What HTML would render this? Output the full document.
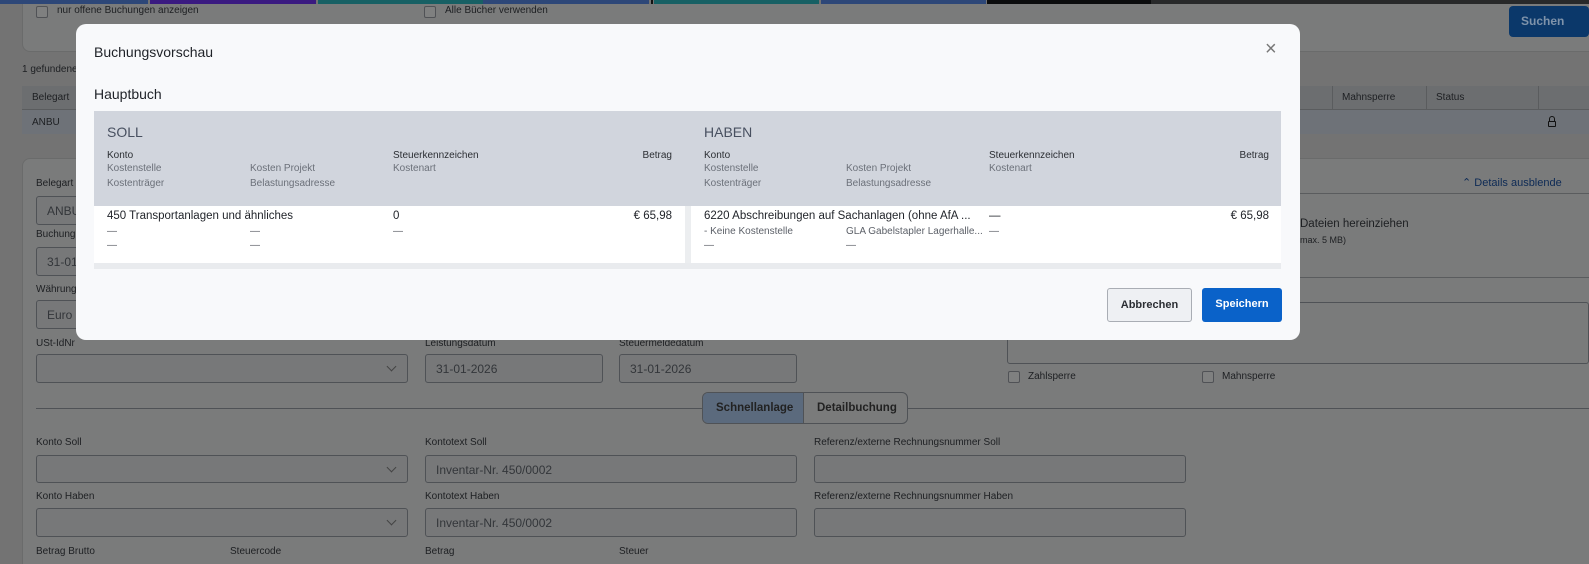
<!DOCTYPE html>
<html><head><meta charset="utf-8"><style>
*{box-sizing:border-box;margin:0;padding:0}
html,body{width:1589px;height:564px;overflow:hidden;background:#737373}
body{font-family:"Liberation Sans",sans-serif;position:relative;color:#1f2228}
#w{position:absolute;left:0;top:0;width:1589px;height:564px;overflow:hidden;background:#737373}
.a{position:absolute}
.bar{position:absolute;top:0;height:4px}
.lbl{position:absolute;font-size:10px;color:#1d1f22}
.inp{position:absolute;border:1px solid #4f5256;border-radius:3px;background:#777879;height:29px;font-size:12px;color:#33363a;padding:7px 10px}
.chev{position:absolute;right:12px;top:8px;width:7px;height:7px;border-right:1px solid #444;border-bottom:1px solid #444;transform:rotate(45deg)}
.cb{position:absolute;width:12px;height:12px;border:1px solid #505256;border-radius:2px;background:#7f8080}
.m{position:absolute;left:76px;top:24px;width:1224px;height:316px;background:#f8f9fb;border-radius:10px}
.h{font-size:10px;color:#2b2e33;position:absolute}
.s{font-size:10px;color:#6b7079;position:absolute}
.d{font-size:11.5px;color:#1f2228;position:absolute}
.ds{font-size:10px;color:#5c6068;position:absolute}
</style></head><body><div id="w">
<div class="bar" style="left:0;width:148px;background:#2d4778"></div>
<div class="bar" style="left:150px;width:166px;background:#3a1a80"></div>
<div class="bar" style="left:318px;width:330px;background:#176064"></div>
<div class="bar" style="left:483px;width:166px;background:#2d4778"></div>
<div class="bar" style="left:651px;width:2px;background:#111"></div>
<div class="bar" style="left:654px;width:165px;background:#176064"></div>
<div class="bar" style="left:821px;width:165px;background:#2d4778"></div>
<div class="bar" style="left:987px;width:164px;background:#0b0c0d"></div>
<div class="bar" style="left:1151px;width:438px;background:#28292a"></div>

<div class="a" style="left:22px;top:4px;width:1580px;height:48px;background:#7a7b7b;border:1px solid #6a6b6b;border-top:none;border-radius:0 0 8px 8px"></div>
<div class="cb" style="left:36px;top:6px"></div><div class="lbl" style="left:57px;top:5px">nur offene Buchungen anzeigen</div>
<div class="cb" style="left:424px;top:6px"></div><div class="lbl" style="left:445px;top:5px">Alle Bücher verwenden</div>
<div class="a" style="left:1509px;top:6px;width:80px;height:31px;background:#0b386a;border-radius:4px;color:#7f93aa;font-size:12px;font-weight:bold;padding:8px 0 0 12px">Suchen</div>
<div class="lbl" style="left:22px;top:64px">1 gefundene</div>
<div class="a" style="left:22px;top:86px;width:1567px;height:24px;background:#6c6e70;border-bottom:1px solid #5a5c5e"></div>
<div class="lbl" style="left:32px;top:92px">Belegart</div>
<div class="a" style="left:1332px;top:86px;width:1px;height:24px;background:#5a5c5e"></div>
<div class="a" style="left:1426px;top:86px;width:1px;height:24px;background:#5a5c5e"></div>
<div class="a" style="left:1538px;top:86px;width:1px;height:24px;background:#5a5c5e"></div>
<div class="lbl" style="left:1342px;top:92px">Mahnsperre</div>
<div class="lbl" style="left:1436px;top:92px">Status</div>
<div class="a" style="left:22px;top:110px;width:1567px;height:24px;background:#6e7278"></div>
<div class="lbl" style="left:32px;top:117px">ANBU</div>
<div class="a" style="left:1548px;top:121px;width:8px;height:6px;border:1px solid #111;border-radius:1px"></div>
<div class="a" style="left:1549px;top:116px;width:6px;height:6px;border:1px solid #111;border-bottom:none;border-radius:3px 3px 0 0"></div>

<div class="a" style="left:22px;top:158px;width:1580px;height:420px;background:#7a7b7b;border:1px solid #6a6b6b;border-radius:8px"></div>
<div class="lbl" style="left:36px;top:178px">Belegart</div>
<div class="inp" style="left:36px;top:196px;width:80px">ANBU</div>
<div class="lbl" style="left:36px;top:229px">Buchung</div>
<div class="inp" style="left:36px;top:247px;width:80px">31-01</div>
<div class="lbl" style="left:36px;top:284px">Währung</div>
<div class="inp" style="left:36px;top:300px;width:80px">Euro</div>
<div class="lbl" style="left:1462px;top:176px;color:#0d2a55;font-size:11px">&#8963; Details ausblende</div>
<div class="a" style="left:1300px;top:193px;width:289px;height:1px;background:#5a5c5e"></div>
<div class="lbl" style="left:1300px;top:218px;font-size:11.5px">Dateien hereinziehen</div>
<div class="lbl" style="left:1300px;top:235px;font-size:9px">max. 5 MB)</div>
<div class="a" style="left:1300px;top:277px;width:289px;height:1px;background:#5a5c5e"></div>
<div class="a" style="left:1007px;top:302px;width:582px;height:62px;border:1px solid #4f5256;border-radius:3px"></div>
<div class="cb" style="left:1008px;top:371px"></div><div class="lbl" style="left:1028px;top:371px">Zahlsperre</div>
<div class="cb" style="left:1202px;top:371px"></div><div class="lbl" style="left:1222px;top:371px">Mahnsperre</div>

<div class="lbl" style="left:36px;top:338px">USt-IdNr</div>
<div class="inp" style="left:36px;top:354px;width:372px"><div class="chev"></div></div>
<div class="lbl" style="left:425px;top:338px">Leistungsdatum</div>
<div class="inp" style="left:425px;top:354px;width:178px">31-01-2026</div>
<div class="lbl" style="left:619px;top:338px">Steuermeldedatum</div>
<div class="inp" style="left:619px;top:354px;width:178px">31-01-2026</div>

<div class="a" style="left:36px;top:408px;width:666px;height:1px;background:#4f5256"></div>
<div class="a" style="left:908px;top:408px;width:681px;height:1px;background:#4f5256"></div>
<div class="a" style="left:702px;top:392px;width:206px;height:32px;border:1px solid #4f5256;border-radius:6px;overflow:hidden">
<div class="a" style="left:0;top:0;width:101px;height:30px;background:#5b6a7d;border-right:1px solid #4f5256;font-size:11.5px;font-weight:bold;padding:9px 0 0 13px;color:#222">Schnellanlage</div>
<div class="a" style="left:102px;top:0;width:104px;height:30px;font-size:11.5px;font-weight:bold;padding:9px 0 0 12px;color:#222">Detailbuchung</div></div>

<div class="lbl" style="left:36px;top:437px">Konto Soll</div>
<div class="inp" style="left:36px;top:455px;width:372px;height:28px"><div class="chev"></div></div>
<div class="lbl" style="left:425px;top:437px">Kontotext Soll</div>
<div class="inp" style="left:425px;top:455px;width:372px;height:28px">Inventar-Nr. 450/0002</div>
<div class="lbl" style="left:814px;top:437px">Referenz/externe Rechnungsnummer Soll</div>
<div class="inp" style="left:814px;top:455px;width:372px;height:28px"></div>
<div class="lbl" style="left:36px;top:491px">Konto Haben</div>
<div class="inp" style="left:36px;top:508px;width:372px"><div class="chev"></div></div>
<div class="lbl" style="left:425px;top:491px">Kontotext Haben</div>
<div class="inp" style="left:425px;top:508px;width:372px">Inventar-Nr. 450/0002</div>
<div class="lbl" style="left:814px;top:491px">Referenz/externe Rechnungsnummer Haben</div>
<div class="inp" style="left:814px;top:508px;width:372px"></div>
<div class="lbl" style="left:36px;top:546px">Betrag Brutto</div>
<div class="lbl" style="left:230px;top:546px">Steuercode</div>
<div class="lbl" style="left:425px;top:546px">Betrag</div>
<div class="lbl" style="left:619px;top:546px">Steuer</div>

<div class="m"></div>
<div class="a" style="left:94px;top:44px;font-size:14px;color:#1f2228">Buchungsvorschau</div>
<div class="a" style="left:1265px;top:38px;font-size:20px;color:#777;font-weight:300">&#215;</div>
<div class="a" style="left:94px;top:86px;font-size:14px;color:#1f2228">Hauptbuch</div>
<div class="a" style="left:94px;top:111px;width:1187px;height:95px;background:#d1d5dd"></div>
<div class="a" style="left:94px;top:206px;width:1187px;height:57px;background:#fff"></div>
<div class="a" style="left:685px;top:206px;width:6px;height:57px;background:#eceef0"></div>
<div class="a" style="left:94px;top:263px;width:1187px;height:6px;background:#e9ebee"></div>

<div class="a" style="left:107px;top:124px;font-size:14px;color:#485060">SOLL</div>
<div class="h" style="left:107px;top:150px">Konto</div>
<div class="h" style="left:393px;top:150px">Steuerkennzeichen</div>
<div class="h" style="left:600px;width:72px;text-align:right;top:150px">Betrag</div>
<div class="s" style="left:107px;top:163px">Kostenstelle</div>
<div class="s" style="left:250px;top:163px">Kosten Projekt</div>
<div class="s" style="left:393px;top:163px">Kostenart</div>
<div class="s" style="left:107px;top:178px">Kostenträger</div>
<div class="s" style="left:250px;top:178px">Belastungsadresse</div>
<div class="d" style="left:107px;top:210px">450 Transportanlagen und ähnliches</div>
<div class="d" style="left:393px;top:210px">0</div>
<div class="d" style="left:600px;width:72px;text-align:right;top:210px">€ 65,98</div>
<div class="ds" style="left:107px;top:226px">—</div><div class="ds" style="left:250px;top:226px">—</div><div class="ds" style="left:393px;top:226px">—</div>
<div class="ds" style="left:107px;top:240px">—</div><div class="ds" style="left:250px;top:240px">—</div>

<div class="a" style="left:704px;top:124px;font-size:14px;color:#485060">HABEN</div>
<div class="h" style="left:704px;top:150px">Konto</div>
<div class="h" style="left:989px;top:150px">Steuerkennzeichen</div>
<div class="h" style="left:1197px;width:72px;text-align:right;top:150px">Betrag</div>
<div class="s" style="left:704px;top:163px">Kostenstelle</div>
<div class="s" style="left:846px;top:163px">Kosten Projekt</div>
<div class="s" style="left:989px;top:163px">Kostenart</div>
<div class="s" style="left:704px;top:178px">Kostenträger</div>
<div class="s" style="left:846px;top:178px">Belastungsadresse</div>
<div class="d" style="left:704px;top:210px">6220 Abschreibungen auf Sachanlagen (ohne AfA ...</div>
<div class="d" style="left:989px;top:210px">—</div>
<div class="d" style="left:1197px;width:72px;text-align:right;top:210px">€ 65,98</div>
<div class="ds" style="left:704px;top:226px">- Keine Kostenstelle</div><div class="ds" style="left:846px;top:226px">GLA Gabelstapler Lagerhalle...</div><div class="ds" style="left:989px;top:226px">—</div>
<div class="ds" style="left:704px;top:240px">—</div><div class="ds" style="left:846px;top:240px">—</div>

<div class="a" style="left:1107px;top:288px;width:85px;height:34px;border:1px solid #a9adb4;border-radius:3px;background:#eef0f3;font-size:11px;font-weight:bold;color:#2b2e33;text-align:center;padding-top:10px">Abbrechen</div>
<div class="a" style="left:1202px;top:288px;width:80px;height:34px;border-radius:3px;background:#0a62c9;font-size:11px;font-weight:bold;color:#fff;text-align:center;padding-top:10px">Speichern</div>
</div></body></html>
